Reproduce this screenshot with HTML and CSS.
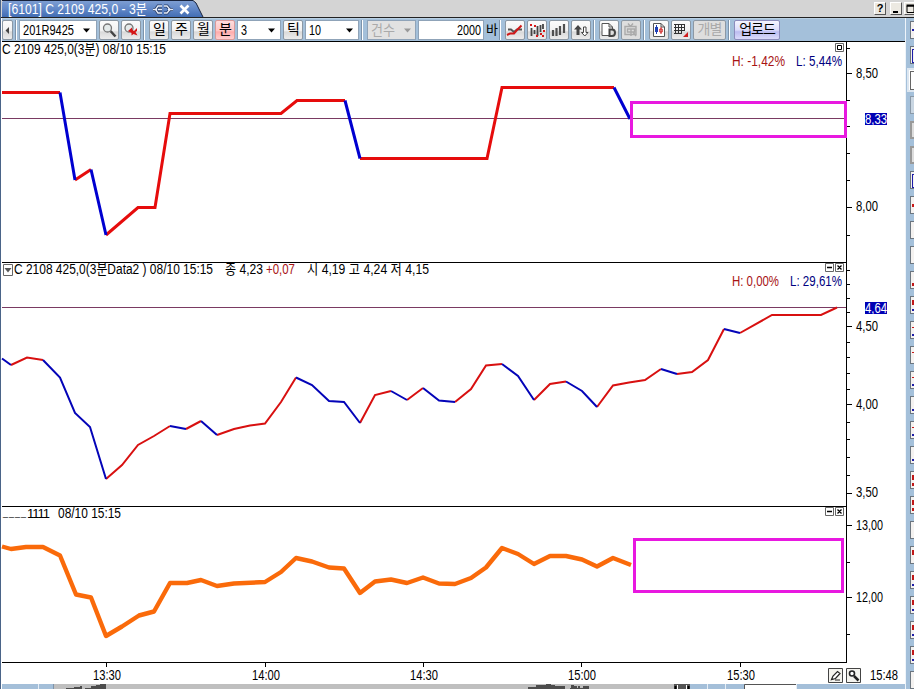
FILE: index.html
```html
<!DOCTYPE html>
<html lang="ko">
<head>
    <meta charset="UTF-8">
    <title>[6101] C 2109 425,0 - 3분</title>
    <link rel="stylesheet" href="styles.css">
</head>
<body>
    <div class="titlebar">
        <div class="tab">
            <svg class="tab_bg" width="203" height="17" viewBox="0 0 203 17">
                <defs>
                    <linearGradient id="tab_grad" x1="0" y1="0" x2="0" y2="1">
                        <stop offset="0" stop-color="#7f9fd3"/>
                        <stop offset="0.5" stop-color="#6288c8"/>
                        <stop offset="1" stop-color="#426db3"/>
                    </linearGradient>
                </defs>
                <path d="M0 17V2L2 .5H191L194 3L201 17Z" fill="url(#tab_grad)"/>
                <path d="M0 .5H191L194 3L201 17" fill="none" stroke="#18233c"/>
                <!-- link -->
                <path d="M151 9.500H155M160 6H156L153.500 9.500L156 13H160M162 6H165L168 9.500L165 13H162M166 9.500H171M156 9.500H160" fill="none" stroke="#273d67" stroke-width="3"/>
                <path d="M151 9.500H155M160 6H156L153.500 9.500L156 13H160M162 6H165L168 9.500L165 13H162M166 9.500H171M156 9.500H160" fill="none" stroke="#e8eefa" stroke-width="1.300"/>
                <path d="M178.500 5.500L186.500 13.500M186.500 5.500L178.500 13.500" stroke="#fff" stroke-width="2.600"/>
            </svg>
            <svg class="tab_text" width="150" height="17"><text x="6" y="14" textLength="139" lengthAdjust="spacingAndGlyphs">[6101] C 2109 425,0 - 3분</text></svg>
        </div>
        <div class="win_buttons">
            <span class="win_btn help">?</span>
            <span class="win_btn"><svg width="12" height="12"><rect x="2" y="8" width="5" height="2"/></svg></span>
            <span class="win_btn"><svg width="12" height="12"><path d="M2 3H9V9.500H2Z" fill="none" stroke="#000"/><path d="M1.500 2.500H9.500" stroke="#000" stroke-width="2"/></svg></span>
        </div>
    </div>

    <div class="main">
        <div class="work">
            <div class="toolbar">
                <span class="btn btn_prev"><svg width="9" height="18"><path d="M6 6V13L2.500 9.500Z" fill="#444"/></svg></span>
                <span class="sep sep_first"></span>
                <span class="combo code">
                    <svg width="76" height="18"><text x="3" y="14" textLength="51" lengthAdjust="spacingAndGlyphs">201R9425</text><path d="M63 7.500H70L66.500 11.500Z"/></svg>
                </span>
                <span class="btn"><svg width="18" height="18"><path d="M10.500 10L15.500 15.500" stroke="#444" stroke-width="2.500"/><circle cx="7.500" cy="7" r="4" fill="#e4eaea" stroke="#777" stroke-width="1.300"/></svg></span>
                <span class="btn"><svg width="18" height="18"><circle cx="7" cy="7" r="4" fill="#e4eaea" stroke="#777" stroke-width="1.300"/><path d="M6 10L10 6.500V8.500L12 10L15 7V10L13.500 11L15.500 14.500L11.500 13L9.500 14.500V12Z" fill="#d51616"/></svg></span>
                <span class="sep"></span>
                <span class="btn txt">일</span>
                <span class="btn txt">주</span>
                <span class="btn txt">월</span>
                <span class="btn txt on">분</span>
                <span class="combo min">
                    <svg width="42" height="18"><text x="3" y="14" textLength="6" lengthAdjust="spacingAndGlyphs">3</text><path d="M30 7.500H37L33.500 11.500Z"/></svg>
                </span>
                <span class="btn txt">틱</span>
                <span class="combo tick">
                    <svg width="52" height="18"><text x="3" y="14" textLength="12" lengthAdjust="spacingAndGlyphs">10</text><path d="M40 7.500H47L43.500 11.500Z"/></svg>
                </span>
                <span class="sep"></span>
                <span class="combo count">
                    <svg width="47" height="18"><text x="3" y="14" textLength="24" lengthAdjust="spacingAndGlyphs">건수</text><path d="M36 7.500H43L39.500 11.500Z"/></svg>
                </span>
                <span class="combo bars">
                    <svg width="64" height="18"><text x="38" y="14" textLength="24" lengthAdjust="spacingAndGlyphs">2000</text></svg>
                </span>
                <span class="unit">바</span>
                <span class="sep"></span>
                <span class="btn"><svg width="18" height="18"><path d="M2 8.500H5L8 11L11 8.500H16" fill="none" stroke="#555" stroke-width="2"/><path d="M1 14L4 12.500H8L11 9L15.500 4.500" fill="none" stroke="#d01818" stroke-width="2"/></svg></span>
                <span class="btn"><svg width="18" height="18"><path d="M3.500 7V15M6.500 9V13M9.500 5V15M12.500 4V11M15 3V8" stroke="#444" stroke-width="1.800"/><path d="M2 3H4V5H2ZM6 4H8V6H6ZM12 12H14V14H12ZM15 9H17V11H15ZM8 14H10V16H8ZM14 14H16V16H14Z" fill="#d81818"/></svg></span>
                <span class="btn"><svg width="18" height="18"><path d="M3 9V15M6.500 7V15M10 5V14M14 3V12" stroke="#505050" stroke-width="2.200"/></svg></span>
                <span class="btn"><svg width="18" height="18"><path d="M6 4L10 8.500H7.500V14H4.500V8.500H2Z" fill="#444"/><path d="M11.500 6H14V11.500H16L12.800 15L9.500 11.500H11.500Z" fill="#fff" stroke="#444"/></svg></span>
                <span class="sep"></span>
                <span class="btn"><svg width="18" height="18"><path d="M2 2.500H9L12.500 6V14.500H2Z M9 2.500V6H12.500" fill="#fff" stroke="#555"/><path d="M9.500 8.500H12Q15 8.500 15 11.800Q15 15 12 15H9.500Z" fill="#ddd" stroke="#444" stroke-width="2"/></svg></span>
                <span class="btn off"><svg width="18" height="18"><path d="M3 5.500H14V13.500H3ZM6 2.500L8.500 5.500L11 2.500M5.500 8H9V11H5.500ZM9 15V8H12.500V11H9M11 11L14 15" fill="none" stroke="#aaa" stroke-width="1.400"/></svg></span>
                <span class="sep"></span>
                <span class="btn"><svg width="18" height="18"><path d="M3.500 2.500H11L14.500 6V15.500H3.500ZM11 2.500V6H14.500" fill="#fff" stroke="#555"/><path d="M5 6H8V11H5ZM6 4H7V13H6Z" fill="#1d3fb5"/><path d="M11 6V13M9.800 8H12.200V11H9.800Z" fill="none" stroke="#cf2222"/></svg></span>
                <span class="btn"><svg width="18" height="18"><path d="M3.500 3V13M6.500 3V13M9.500 3V13M12.500 3V10M2 3.500H13M2 6.500H13M2 9.500H13M2 12.500H10" stroke="#333"/><path d="M16 11V16H11Z" fill="#cf1c1c"/></svg></span>
                <span class="btn txt off each">개별</span>
                <span class="sep"></span>
                <span class="btn txt upload">업로드</span>
            </div>

            <!-- C 2109 425,0 -->
            <svg class="pane" width="903" height="221" viewBox="2 42 903 221">
                <text x="2" y="54" textLength="164" lengthAdjust="spacingAndGlyphs">C 2109 425,0(3분) 08/10 15:15</text>
                <text class="high" x="732" y="66" textLength="53" lengthAdjust="spacingAndGlyphs">H: -1,42%</text>
                <text class="low" x="796" y="66" textLength="46" lengthAdjust="spacingAndGlyphs">L: 5,44%</text>
                <path class="box" d="M835.500 43.500H843.500V51.500H835.500Z"/>
                <path d="M837.500 45.500H841.500V49.500H837.500Z" fill="none" stroke="#000"/>
                <path class="now" d="M2 118.500H846"/>
                <g class="up thick">
                    <path d="M2 92.500H60M75 180L91 169.500M106 235L138 207.500H155L170 113.500H281L297 100.500H345M360 158.500H487L502 87.500H614"/>
                </g>
                <g class="down thick">
                    <path d="M60 92.500L75 180M91 169.500L106 235M345 100.500L360 158.500M614 87.500L630 119"/>
                </g>
                <path class="axis" d="M846.500 42V263M2 262.500H847"/>
                <path class="axis" d="M847 73.500H852M847 207.500H852M847 48.500H850M847 100.500H850M847 126.500H850M847 153.500H850M847 180.500H850M847 235.500H850"/>
                <text x="856" y="78" textLength="22" lengthAdjust="spacingAndGlyphs">8,50</text>
                <text x="856" y="211" textLength="22" lengthAdjust="spacingAndGlyphs">8,00</text>
                <rect x="865" y="113" width="22" height="12" fill="#0000b4"/>
                <text class="cur" x="865" y="124" textLength="22" lengthAdjust="spacingAndGlyphs">8,33</text>
                <rect class="mark" x="631.500" y="102.500" width="214" height="34"/>
            </svg>

            <!-- C 2108 425,0 -->
            <svg class="pane" width="903" height="244" viewBox="2 263 903 244">
                <path class="box" d="M3.500 264.500H12.500V275.500H3.500Z"/>
                <path d="M4.500 268H11.500L8 272.500Z" fill="#555"/>
                <text x="14" y="274" textLength="199" lengthAdjust="spacingAndGlyphs">C 2108 425,0(3분Data2 ) 08/10 15:15</text>
                <text x="225" y="274" textLength="38" lengthAdjust="spacingAndGlyphs">종 4,23</text>
                <text class="high" x="266" y="274" textLength="29" lengthAdjust="spacingAndGlyphs">+0,07</text>
                <text x="307" y="274" textLength="122" lengthAdjust="spacingAndGlyphs">시 4,19 고 4,24 저 4,15</text>
                <text class="high" x="732" y="286" textLength="47" lengthAdjust="spacingAndGlyphs">H: 0,00%</text>
                <text class="low" x="790" y="286" textLength="52" lengthAdjust="spacingAndGlyphs">L: 29,61%</text>
                <path class="box" d="M825.500 263.500H833.500V271.500H825.500ZM835.500 263.500H843.500V271.500H835.500Z"/>
                <path d="M827 267.500H832M837.500 265.500L841.500 269.500M841.500 265.500L837.500 269.500" stroke="#000" stroke-width="1.300"/>
                <path class="now" d="M2 307.500H846"/>
                <g class="up">
                    <path d="M11 365L27 357.500L43 360M106 479L122 465L138 445L154 436L170 426M186 429L201 421M217 435L234 429L250 425.500L265 423.500L281 402L296 377.500M360 423L375 395L391 391M407 400L423 388M455 402L471 389L486 365.500L502 364M534 400L550 384L566 381.500M597 407L613 385.500L629 382.500L645 380L661 369M677 374L692 372L708 360L724 329M740 333L772 315H821L837 307.500"/>
                </g>
                <g class="down">
                    <path d="M2 358.500L11 365M43 360L60 377.500L75 413L90 427L106 479M170 426L186 429M201 421L217 435M296 377.500L312 385L329 401L344 402L360 423M391 391L407 400M423 388L439 400.500L455 402M502 364L518 376L534 400M566 381.500L582 391L597 407M661 369L677 374M724 329L740 333"/>
                </g>
                <path class="axis" d="M846.500 263V507M2 506.500H847"/>
                <path class="axis" d="M847 326.500H852M847 404.500H852M847 493.500H852"/>
                <path class="axis" d="M847 270.500H850M847 284.500H850M847 298.500H850M847 312.500H850M847 342.500H850M847 357.500H850M847 373.500H850M847 389.500H850M847 422.500H850M847 439.500H850M847 457.500H850M847 475.500H850"/>
                <text x="856" y="331" textLength="22" lengthAdjust="spacingAndGlyphs">4,50</text>
                <text x="856" y="409" textLength="22" lengthAdjust="spacingAndGlyphs">4,00</text>
                <text x="856" y="497" textLength="22" lengthAdjust="spacingAndGlyphs">3,50</text>
                <rect x="865" y="302" width="22" height="12" fill="#0000b4"/>
                <text class="cur" x="865" y="313" textLength="22" lengthAdjust="spacingAndGlyphs">4,64</text>
            </svg>

            <!-- 1111 -->
            <svg class="pane" width="903" height="156" viewBox="2 507 903 156">
                <text class="under" x="3" y="516" textLength="23">____</text>
                <text x="27" y="518" textLength="23" lengthAdjust="spacing" class="ones">1111</text>
                <text x="58" y="518" textLength="63" lengthAdjust="spacingAndGlyphs">08/10 15:15</text>
                <path class="box" d="M825.500 507.500H833.500V515.500H825.500ZM835.500 507.500H843.500V515.500H835.500Z"/>
                <path d="M827 511.500H832M837.500 509.500L841.500 513.500M841.500 509.500L837.500 513.500" stroke="#000" stroke-width="1.300"/>
                <path class="sum" d="M2 546.500L11 549L26 547H43L60 555.500L76 594.500L91 597.500L106 636L122 626.500L139 615.500L154 611.500L170 583H187L201 580L217 586L234 583.500L265 582L281 572L296 558L312 561.500L329 567.500L344 568.500L360 593L375 581.500L391 579.500L407 583L423 577.500L439 583.500L455 584L471 578L486 567.500L502 548L518 554L534 564L550 556H566L582 559.500L597 566.500L613 558L631 565"/>
                <path class="axis" d="M846.500 507V663M2 662.500H847"/>
                <path class="axis" d="M847 525.500H852M847 597.500H852M847 562.500H850M847 634.500H850"/>
                <text x="856" y="530" textLength="27" lengthAdjust="spacingAndGlyphs">13,00</text>
                <text x="856" y="602" textLength="27" lengthAdjust="spacingAndGlyphs">12,00</text>
                <rect class="mark" x="634.500" y="539.500" width="208" height="52"/>
            </svg>

            <!-- time axis -->
            <svg class="pane" width="903" height="21" viewBox="2 663 903 21">
                <path class="axis" d="M106.500 663V667M265.500 663V667M423.500 663V667M581.500 663V667M740.500 663V667"/>
                <text x="93" y="680" textLength="28" lengthAdjust="spacingAndGlyphs">13:30</text>
                <text x="252" y="680" textLength="28" lengthAdjust="spacingAndGlyphs">14:00</text>
                <text x="410" y="680" textLength="28" lengthAdjust="spacingAndGlyphs">14:30</text>
                <text x="568" y="680" textLength="28" lengthAdjust="spacingAndGlyphs">15:00</text>
                <text x="727" y="680" textLength="28" lengthAdjust="spacingAndGlyphs">15:30</text>
                <text x="870" y="680" textLength="28" lengthAdjust="spacingAndGlyphs">15:48</text>
                <path d="M828.500 668.500H842.500V682.500H828.500ZM846.500 668.500H860.500V682.500H846.500Z" fill="#f4f3ee" stroke="#444"/>
                <path d="M831.500 679.500L833 676L837.500 671.500L840 673.500L835.500 678.500L831.500 679.500ZM835 680H840" fill="#fff" stroke="#222" stroke-width="1.200"/>
                <path d="M854 676L858.500 680.500" stroke="#222" stroke-width="2.500"/>
                <circle cx="852" cy="673.500" r="2.500" fill="#fff" stroke="#222" stroke-width="1.600"/>
            </svg>

            <!-- scroll bar -->
            <svg class="pane" width="903" height="5" viewBox="2 684 903 5">
                <rect x="2" y="684" width="903" height="5" fill="#a4bfd9"/>
                <rect x="54" y="684" width="621" height="5" fill="#bfbfbf"/>
                <path d="M38.500 684V689M707.500 684V689M725.500 684V689M796.500 684V689" stroke="#e6eef6"/>
                <path d="M53.500 684V689" stroke="#7f94aa"/>
                <path d="M66 689V688H74V687H80V686H82V689ZM85 689V688H91V686H96V685H100V684H106V689ZM528 689V687H536V685H546V684H551V685H555V686H565V689ZM570 689V688H571V685H574V686H577V688H578V686H580V688H583V686H589V689Z" fill="#4c4c4c"/>
                <rect x="674" y="684" width="16" height="5" fill="#555"/>
                <path d="M675.500 686V689M688.500 686V689" stroke="#000" stroke-width="2"/>
                <path d="M677.500 685V689M686.500 685V689" stroke="#fff"/>
                <rect x="744" y="685" width="52" height="4" fill="#fff"/>
                <path d="M744.500 689V684.500H796" fill="none" stroke="#555"/>
            </svg>
        </div>

        <div class="side">
            <span class="tool blue_mid"></span>
            <span class="tool blue_box"></span>
            <span class="tool pressed"></span>
            <span class="tool dim"></span>
            <span class="tool gray"></span>
            <span class="tool gray"></span>
            <span class="tool blue_box"></span>
            <span class="tool red_mid"></span>
            <span class="tool"></span>
            <span class="tool"></span>
            <span class="tool red_low"></span>
            <span class="tool red_top blue_low"></span>
            <span class="tool red_line blue_low"></span>
            <span class="tool red_line"></span>
            <span class="tool red_line blue_low"></span>
            <span class="tool blue_low"></span>
            <span class="tool red_line blue_low"></span>
            <span class="tool blue_low"></span>
            <span class="tool red_top red_low"></span>
            <span class="tool red_top red_low"></span>
            <span class="tool"></span>
            <span class="tool red_top"></span>
            <span class="tool red_top blue_low"></span>
            <span class="tool red_top blue_low"></span>
            <span class="tool red_top blue_low"></span>
            <span class="tool red_top blue_low"></span>
            <span class="tool"></span>
        </div>
    </div>
</body>
</html>
```

FILE: styles.css
```css
* {
    box-sizing: border-box;
}
body {
    margin: 0;
    width: 914px;
    height: 689px;
    overflow: hidden;
    background: #fff;
    font-family: "Liberation Sans", "Noto Sans CJK KR", sans-serif;
    font-size: 14px;
    border-left: 1px solid #4a6488;
}
svg {
    display: block;
    overflow: visible;
}
svg text {
    font-size: 14px;
    fill: #000;
}

/* title */
.titlebar {
    display: flex;
    justify-content: space-between;
    height: 18px;
    background: #d4d4d4;
    border-bottom: 1px solid #222;
    padding-left: 1px;
}
.tab {
    position: relative;
    width: 203px;
    height: 17px;
}
.tab_text {
    position: absolute;
    left: 0;
    top: 0;
}
.tab_text text {
    fill: #fff;
}
.win_buttons {
    display: flex;
    gap: 4px;
    padding-top: 2px;
    width: 40px;
    overflow: hidden;
}
.win_btn {
    flex: none;
    width: 12px;
    height: 13px;
    background: #ece9e2;
    border: 1px solid #fff;
    border-right-color: #555;
    border-bottom-color: #555;
}
.win_btn:nth-child(2) {
    margin-right: -2px;
}
.help {
    font-size: 11px;
    font-weight: bold;
    line-height: 11px;
    text-align: center;
}

.main {
    display: flex;
}
.work {
    width: 904px;
    padding-left: 1px;
}

/* toolbar */
.toolbar {
    display: flex;
    align-items: center;
    gap: 2px;
    height: 24px;
    background: #a4c0da;
    border-bottom: 1px solid #000;
    border-top: 1px solid #b8cfe3;
}
.btn {
    flex: none;
    width: 20px;
    height: 20px;
    border: 1px solid #8c98a4;
    border-radius: 2px;
    background: linear-gradient(#fbfbfb, #f1f1f1 55%, #d9d9d9 60%, #ececec);
}
.btn_prev {
    width: 11px;
}
.txt {
    font-size: 14px;
    line-height: 17px;
    text-align: center;
    letter-spacing: -1px;
}
.on {
    background: linear-gradient(#ffdcdc, #ffc4c4 55%, #ffaaaa 60%, #ffd0d0);
    border-color: #d99a9a;
}
.off {
    color: #aaa;
    background: #dedede;
}
.each {
    width: 33px;
}
.upload {
    width: 46px;
    background: linear-gradient(#f4f4ff, #dcdcfa 50%, #bcbcf0 60%, #dadafa);
    border-color: #8c8cbc;
}
.sep {
    flex: none;
    width: 2px;
    height: 20px;
    margin-right: 2px;
    background: #fff;
    border-left: 1px solid #7d93aa;
}
.sep_first {
    margin-right: 0;
}
.combo {
    flex: none;
    height: 20px;
    background: #fff;
    border: 1px solid #8fa3b8;
}
.code {
    width: 78px;
}
.min {
    width: 44px;
}
.tick {
    width: 54px;
}
.count {
    width: 49px;
    background: #e2e2e2;
}
.count text {
    fill: #aaa;
}
.count path {
    fill: #999;
}
.bars {
    width: 66px;
}
.unit {
    width: 11px;
    font-size: 13px;
    line-height: 18px;
    letter-spacing: -1px;
}

/* chart */
.axis {
    fill: none;
    stroke: #000;
}
.now {
    stroke: #7a3a62;
}
.up {
    fill: none;
    stroke: #d81010;
    stroke-width: 2;
}
.down {
    fill: none;
    stroke: #0404b8;
    stroke-width: 2;
}
.thick {
    stroke-width: 3;
}
.up.thick {
    stroke: #e60c0c;
}
.down.thick {
    stroke: #0000d0;
}
.sum {
    fill: none;
    stroke: #fa6a0a;
    stroke-width: 4.4;
    stroke-linejoin: round;
}
.mark {
    fill: none;
    stroke: #e818e0;
    stroke-width: 3;
}
.box {
    fill: #fff;
    stroke: #666;
}
text.high {
    fill: #a81414;
}
text.low {
    fill: #000080;
}
text.cur {
    fill: #fff;
}
text.under {
    font-size: 9px;
}
text.ones {
    font-size: 13px;
}

/* right tools */
.side {
    display: flex;
    flex-direction: column;
    gap: 7px;
    width: 9px;
    height: 671px;
    padding: 3px 0 0 4px;
    background: #a4c0da;
    border-left: 1px solid #eef4fa;
    overflow: hidden;
}
.tool {
    flex: none;
    position: relative;
    width: 18px;
    height: 18px;
    background: #f4f2f0;
    border: 1px solid #6c7680;
}
.tool::before,
.tool::after {
    content: "";
    position: absolute;
    left: 1px;
    width: 5px;
}
.pressed {
    height: 24px;
    margin: -3px 0 -3px -3px;
    border: 2px solid #dce6f0;
    background: #fff;
}
.pressed::before {
    top: 1px;
    height: 17px;
    border: 1px solid #666;
}
.gray {
    background: #ddd;
    border: 2px solid #999;
}
.dim {
    background: #c9d6e2;
    border-color: #8a99a8;
}
.blue_mid::before {
    top: 7px;
    height: 2px;
    background: #1c1ca8;
}
.blue_box::before {
    top: 2px;
    height: 12px;
    border: 1px solid #1c1ca8;
}
.red_mid::before {
    top: 7px;
    height: 3px;
    background: #c81818;
}
.red_top::before {
    top: 3px;
    height: 5px;
    background: #c01818;
}
.red_line::before {
    top: 5px;
    height: 1px;
    background: #c81818;
}
.red_low::after {
    bottom: 2px;
    height: 3px;
    background: #c01818;
}
.blue_low::after {
    bottom: 2px;
    height: 2px;
    background: #1c1ca8;
}
```
